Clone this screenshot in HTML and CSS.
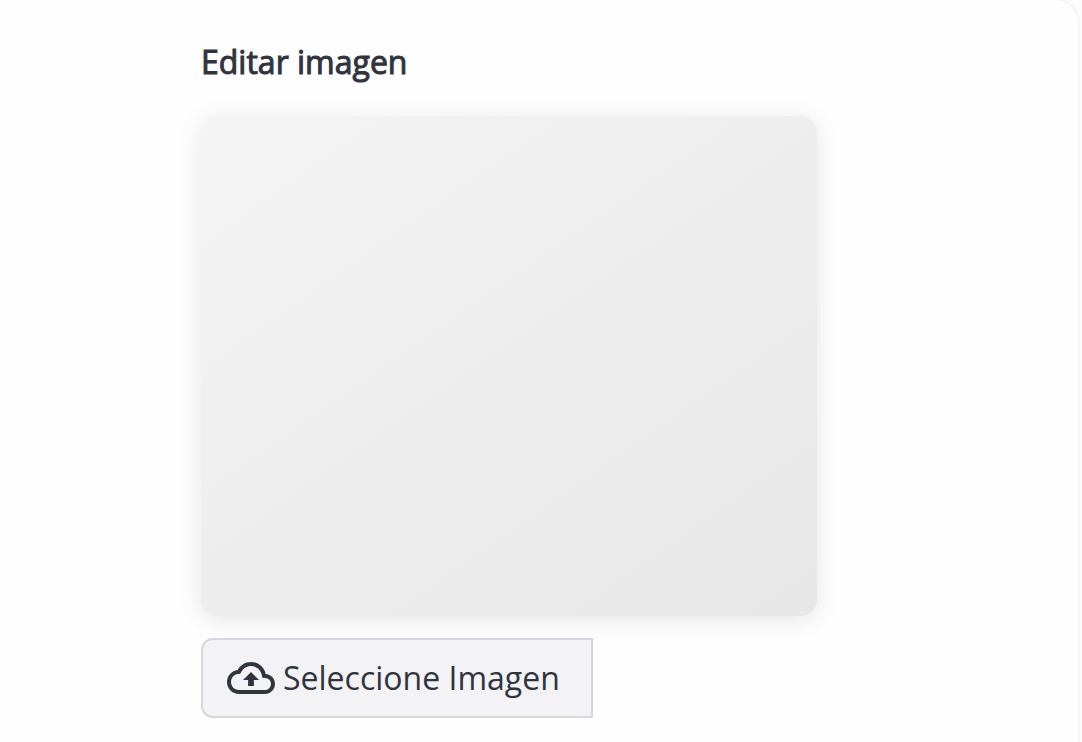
FILE: index.html
```html
<!DOCTYPE html>
<html lang="es">
<head>
<meta charset="utf-8">
<meta name="viewport" content="width=device-width, initial-scale=1">
<title>Editar imagen</title>
<link rel="stylesheet" href="styles.css">
</head>
<body>
<main class="card">
  <section class="editor">
    <h1 class="title">Editar imagen</h1>
    <div class="preview"></div>
    <button class="picker" type="button">
      <svg class="picker-icon" viewBox="0 0 24 24" aria-hidden="true"><path d="M19.35 10.04C18.67 6.59 15.64 4 12 4 9.11 4 6.6 5.64 5.35 8.04 2.34 8.36 0 10.91 0 14c0 3.31 2.69 6 6 6h13c2.76 0 5-2.24 5-5 0-2.64-2.05-4.78-4.65-4.96zM19 18H6c-2.21 0-4-1.79-4-4 0-2.05 1.53-3.76 3.56-3.97l1.07-.11.5-.95C8.08 7.14 9.94 6 12 6c2.62 0 4.88 1.86 5.39 4.43l.3 1.5 1.53.11c1.56.1 2.78 1.41 2.78 2.96 0 1.65-1.35 3-3 3zM8 13h2.55v3h2.9v-3H16l-4-4z"/></svg>
      <span>Seleccione Imagen</span>
    </button>
  </section>
</main>
</body>
</html>
```
FILE: styles.css
```css
* {
  box-sizing: border-box;
}

body {
  margin: 0;
  background: #fcfcfc;
  color: #2f343e;
  font-family: "Open Sans", sans-serif;
}

.card {
  min-height: 100vh;
  margin-right: 4px;
  padding: 40px 261px 24px 201px;
  background: #fefefe;
  border-top-right-radius: 24px;
  box-shadow: 0 0 0 2px #f5f5f5, 0 0 4px rgba(0, 0, 0, 0.04);
}

.editor {
  display: flex;
  flex-direction: column;
  align-items: flex-start;
}

.title {
  margin: 0 0 32px;
  font-size: 32px;
  font-weight: 400;
  line-height: 44px;
  -webkit-text-stroke: 1px currentColor;
}

.preview {
  width: 100%;
  height: 500px;
  margin-bottom: 22px;
  border-radius: 16px;
  background: linear-gradient(145deg, #f4f4f4, #e7e7e7);
  box-shadow: 0 4px 24px rgba(0, 0, 0, 0.1);
}

.picker {
  position: relative;
  display: flex;
  align-items: center;
  gap: 8px;
  height: 80px;
  padding: 0 31px 0 24px;
  border: 2px solid #d3d7df;
  border-radius: 12px 0 0 12px;
  background: #f3f3f6;
  color: inherit;
  font: 400 32px/48px "Open Sans", sans-serif;
  cursor: pointer;
}

.picker-icon {
  width: 48px;
  height: 48px;
  fill: currentColor;
}
```
